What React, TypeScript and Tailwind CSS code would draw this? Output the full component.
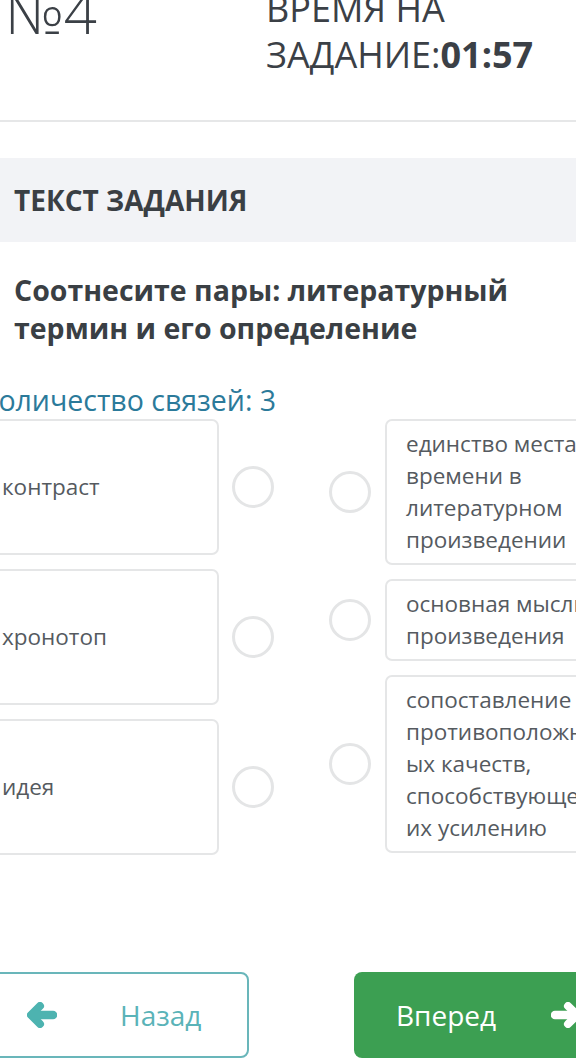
import React from 'react';

const leftItems = ['контраст', 'хронотоп', 'идея'];

// definitions, split the way the card wraps them
const rightItems = [
  ['единство места и', 'времени в', 'литературном', 'произведении'],
  ['основная мысль', 'произведения'],
  ['сопоставление', 'противоположн', 'ых качеств,', 'способствующее', 'их усилению'],
];

const Circle: React.FC = () => (
  <div className="w-[42px] h-[42px] shrink-0 rounded-full border-[3px] border-[#e4e5e6]"></div>
);

const Arrow: React.FC<{ dir: 'left' | 'right'; className?: string }> = ({ dir, className }) => (
  <svg
    viewBox="0 0 30 26"
    className={className}
    fill="none"
    stroke="currentColor"
    strokeLinecap="round"
    strokeLinejoin="round"
    style={dir === 'right' ? { transform: 'scaleX(-1)' } : undefined}
  >
    <polyline points="13,4 4,13 13,22" strokeWidth="8" />
    <line x1="5" y1="13" x2="26" y2="13" strokeWidth="8.5" />
  </svg>
);

const App: React.FC = () => {
  return (
    <div
      className="w-[576px] h-[1062px] overflow-hidden bg-white text-[#3b4046]"
      style={{ fontFamily: '"Open Sans", "Noto Sans", sans-serif' }}
    >
      {/* Header: task number and timer */}
      <div className="-mt-[18px] h-[140px] flex border-b-2 border-[#e6e7e8]">
        <div className="w-[266px] pl-[5px] text-[58px] leading-[60px] font-light">№4</div>
        <div className="mt-[4px] text-[36px] leading-[46px] font-normal">
          ВРЕМЯ НА
          <br />
          ЗАДАНИЕ:<span className="font-bold">01:57</span>
        </div>
      </div>

      {/* Section title */}
      <div className="mt-[36px] h-[84px] bg-[#f2f3f6] flex items-center px-[14px]">
        <h2 className="text-[28px] font-bold text-[#3a3f44]">ТЕКСТ ЗАДАНИЯ</h2>
      </div>

      <p className="mt-[29px] px-[14px] text-[28.5px] leading-[38px] font-bold text-[#3a3f44]">
        Соотнесите пары: литературный
        <br />
        термин и его определение
      </p>

      <div className="mt-[35px] -ml-[19px] text-[28.5px] leading-[36px] text-[#2b7a9a]">
        Количество связей: 3
      </div>

      {/* Matching columns */}
      <div className="mt-[1px] -ml-[18px] flex gap-[55px]">
        <div className="flex flex-col gap-[14px]">
          {leftItems.map((item) => (
            <div key={item} className="flex items-center gap-[13px]">
              <div className="w-[237px] h-[136px] flex items-center pl-[18px] border-2 border-[#e5e6e7] rounded-[7px] text-[22.5px] text-[#555a5f]">
                {item}
              </div>
              <Circle />
            </div>
          ))}
        </div>
        <div className="flex flex-col gap-[14px]">
          {rightItems.map((lines) => (
            <div key={lines[0]} className="flex items-center gap-[14px]">
              <Circle />
              <div className="shrink-0 w-[226px] py-[7px] pl-[19px] border-2 border-[#e5e6e7] rounded-[7px] text-[22.5px] leading-[32px] text-[#555a5f] whitespace-nowrap">
                {lines.map((line) => (
                  <div key={line}>{line}</div>
                ))}
              </div>
            </div>
          ))}
        </div>
      </div>

      {/* Navigation */}
      <div className="mt-[117px] -ml-[21px] flex gap-[105px]">
        <button className="w-[270px] h-[86px] shrink-0 flex items-center pl-[46px] border-2 border-[#69b6ba] rounded-[8px] text-[#5ab3b8] text-[28px]">
          <Arrow dir="left" className="w-[30px] h-[26px] text-[#4db3b0]" />
          <span className="ml-[63px]">Назад</span>
        </button>
        <button className="w-[270px] h-[86px] shrink-0 flex items-center pl-[42px] bg-[#3c9f52] rounded-[8px] text-white text-[28px]">
          <span>Вперед</span>
          <Arrow dir="right" className="ml-[55px] w-[30px] h-[26px] text-white" />
        </button>
      </div>
    </div>
  );
};

export default App;
